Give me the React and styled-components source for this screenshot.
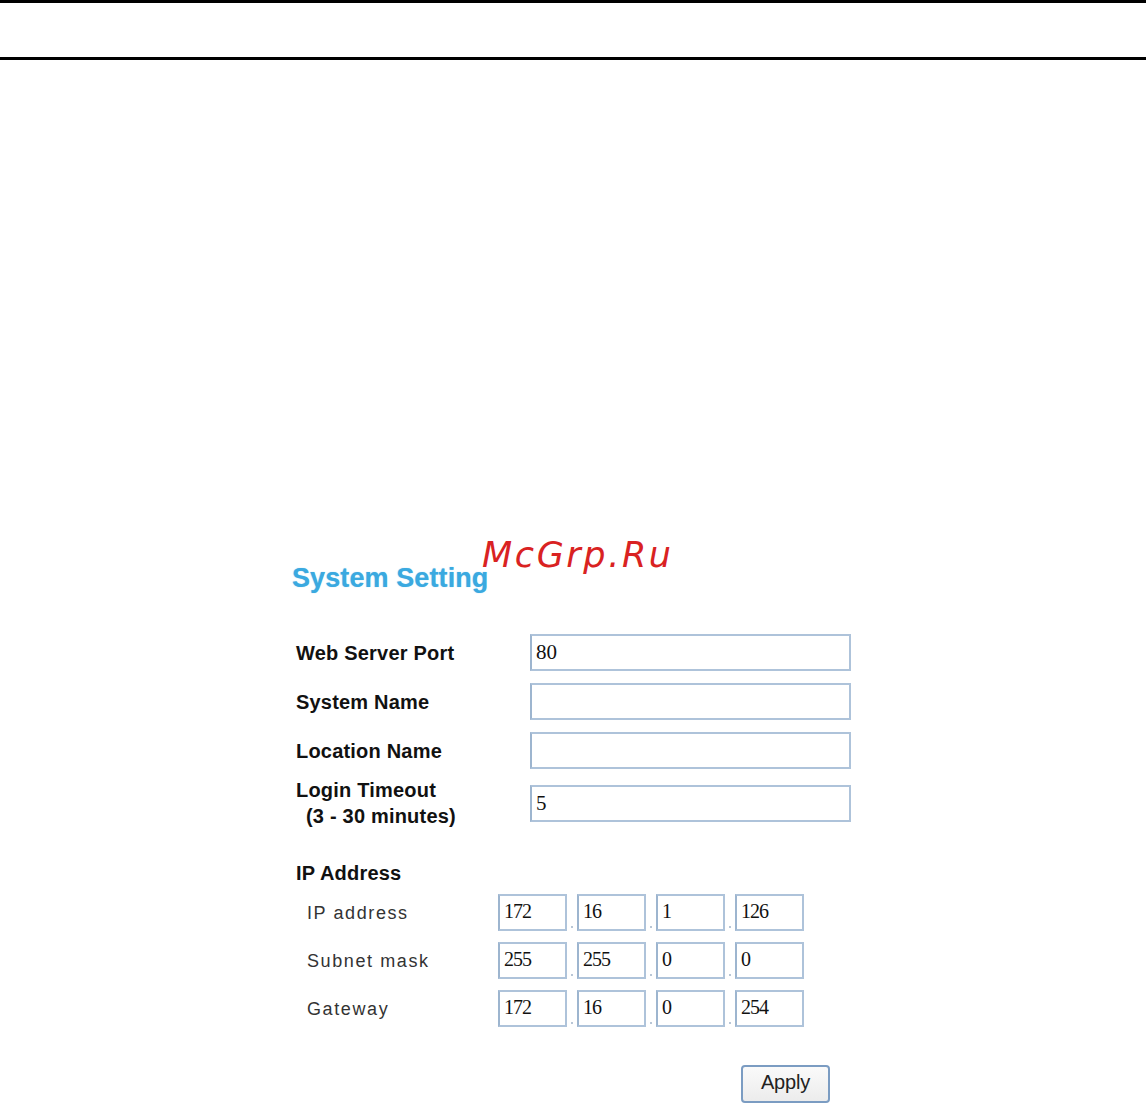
import React from 'react'
import styled, { createGlobalStyle } from 'styled-components'

const GlobalStyle = createGlobalStyle`
  body {
    margin: 0;
    background: #fff;
    font-family: 'Liberation Sans', Arial, sans-serif;
  }
`

const Page = styled.div`
  width: 1146px;
  min-height: 1111px;
  position: relative;
`

const HeaderBand = styled.div`
  height: 54px;
  border-top: 3px solid #000;
  border-bottom: 3px solid #000;
`

const Section = styled.section`
  position: relative;
  margin-top: 502px;
  padding-left: 292px;
`

const Watermark = styled.div`
  position: absolute;
  left: 482px;
  top: -27px;
  font-family: 'DejaVu Sans', sans-serif;
  font-style: oblique;
  font-size: 35px;
  letter-spacing: 2.6px;
  line-height: 40px;
  color: #d92222;
  z-index: 2;
`

const Title = styled.h1`
  margin: 0;
  font-family: 'Liberation Sans', Arial, sans-serif;
  font-weight: bold;
  font-size: 27px;
  line-height: 32px;
  letter-spacing: 0.1px;
  color: #3aa9e0;
  text-shadow: 0 0 1px rgba(58, 169, 224, 0.6);
`

const FormGrid = styled.div`
  display: grid;
  grid-template-columns: 238px 321px;
  row-gap: 12px;
  align-items: center;
  margin-top: 40px;
`

const Label = styled.div`
  padding-left: 4px;
  font-weight: bold;
  font-size: 20px;
  line-height: 26px;
  letter-spacing: 0.2px;
  color: #111;
  margin: ${p => (p.$twoLine ? '-4px 0' : '0')};
`

const Indent = styled.span`
  padding-left: 10px;
`

const TextBox = styled.div`
  box-sizing: border-box;
  height: 37px;
  border: 2px solid #aec3da;
  border-left-color: #9db5cf;
  padding: 3px 4px;
  font-family: 'Liberation Serif', 'Times New Roman', serif;
  font-size: 21px;
  line-height: 26px;
  color: #111;
  background: #fff;
`

const GroupHeading = styled.div`
  margin-top: 35px;
  padding-left: 4px;
  font-weight: bold;
  font-size: 20px;
  line-height: 26px;
  letter-spacing: 0.2px;
  color: #111;
`

const IpGrid = styled.div`
  display: grid;
  grid-template-columns: 206px auto;
  row-gap: 11px;
  align-items: center;
  margin-top: 8px;
`

const SubLabel = styled.div`
  padding-left: 15px;
  font-size: 18px;
  line-height: 22px;
  letter-spacing: 1.6px;
  color: #333;
`

const Octets = styled.div`
  display: flex;
  align-items: flex-end;
`

const OctetBox = styled(TextBox)`
  width: 69px;
  padding: 2px 4px;
  font-size: 20px;
  letter-spacing: -1px;
`

const Dot = styled.span`
  width: 10px;
  height: 10px;
  display: flex;
  align-items: flex-end;
  justify-content: center;

  &::after {
    content: '';
    width: 2px;
    height: 2px;
    margin-bottom: 3px;
    background: #b8c6d6;
  }
`

const ButtonRow = styled.div`
  display: flex;
  margin-top: 38px;
  padding-left: 449px;
`

const ApplyButton = styled.button`
  box-sizing: border-box;
  width: 89px;
  height: 38px;
  border: 2px solid #7b9cc2;
  border-radius: 4px;
  background: linear-gradient(#fafafa, #ececec);
  font-family: 'Liberation Sans', Arial, sans-serif;
  font-size: 20px;
  letter-spacing: -0.2px;
  color: #222;
  padding: 0 0 4px;
`

const fields = [
  { label: 'Web Server Port', value: '80' },
  { label: 'System Name', value: '' },
  { label: 'Location Name', value: '' },
]

const ipRows = [
  { label: 'IP address', parts: ['172', '16', '1', '126'] },
  { label: 'Subnet mask', parts: ['255', '255', '0', '0'] },
  { label: 'Gateway', parts: ['172', '16', '0', '254'] },
]

const App = () => (
  <Page>
    <GlobalStyle />
    <HeaderBand />
    <Section>
      <Watermark>McGrp.Ru</Watermark>
      <Title>System Setting</Title>
      <FormGrid>
        {fields.map(f => (
          <React.Fragment key={f.label}>
            <Label>{f.label}</Label>
            <TextBox>{f.value}</TextBox>
          </React.Fragment>
        ))}
        <Label $twoLine>
          Login Timeout
          <br />
          <Indent>(3 - 30 minutes)</Indent>
        </Label>
        <TextBox>5</TextBox>
      </FormGrid>

      <GroupHeading>IP Address</GroupHeading>
      <IpGrid>
        {ipRows.map(row => (
          <React.Fragment key={row.label}>
            <SubLabel>{row.label}</SubLabel>
            <Octets>
              {row.parts.map((p, i) => (
                <React.Fragment key={i}>
                  {i > 0 && <Dot />}
                  <OctetBox>{p}</OctetBox>
                </React.Fragment>
              ))}
            </Octets>
          </React.Fragment>
        ))}
      </IpGrid>

      <ButtonRow>
        <ApplyButton>Apply</ApplyButton>
      </ButtonRow>
    </Section>
  </Page>
)

export default App
